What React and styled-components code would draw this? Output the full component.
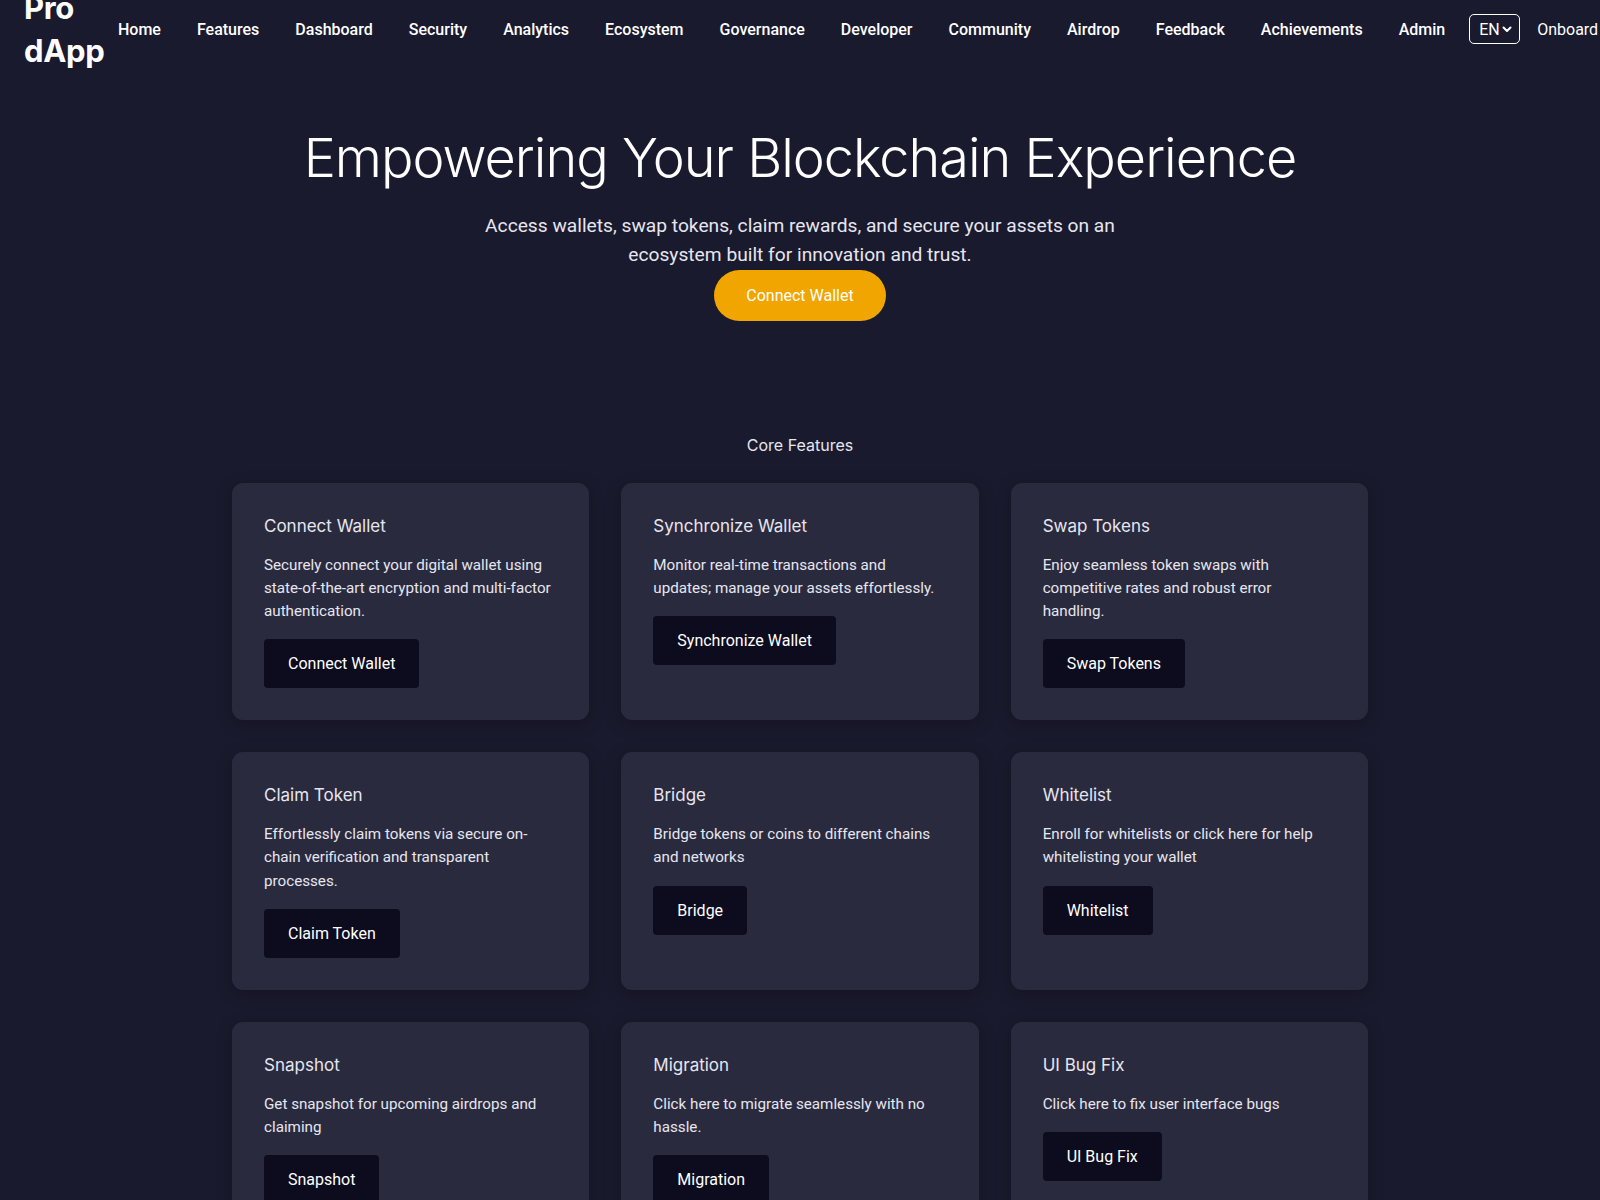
import styled, { createGlobalStyle } from "styled-components";

const BG = "#1a1a2e";
const CARD_BG = "#2a2a3f";
const BTN_DARK = "#0d0c1e";
const ACCENT = "#f0a500";
const TEXT = "#ffffff";
const MUTED = "#e6e6ee";

const HEADING_FONT = "Inter, 'Open Sans', sans-serif";
const BODY_FONT = "Roboto, 'Liberation Sans', sans-serif";

const GlobalStyle = createGlobalStyle`
  html, body {
    margin: 0;
    padding: 0;
    background: ${BG};
    overflow-x: hidden;
  }

  body {
    font-family: ${BODY_FONT};
    color: ${TEXT};
  }

  ::-webkit-scrollbar {
    display: none;
  }

  * {
    box-sizing: border-box;
  }
`;

const navLinks = [
  "Home",
  "Features",
  "Dashboard",
  "Security",
  "Analytics",
  "Ecosystem",
  "Governance",
  "Developer",
  "Community",
  "Airdrop",
  "Feedback",
  "Achievements",
  "Admin",
];

const features = [
  {
    title: "Connect Wallet",
    text: "Securely connect your digital wallet using state-of-the-art encryption and multi-factor authentication.",
  },
  {
    title: "Synchronize Wallet",
    text: "Monitor real-time transactions and updates; manage your assets effortlessly.",
  },
  {
    title: "Swap Tokens",
    text: "Enjoy seamless token swaps with competitive rates and robust error handling.",
  },
  {
    title: "Claim Token",
    text: "Effortlessly claim tokens via secure on-chain verification and transparent processes.",
  },
  {
    title: "Bridge",
    text: "Bridge tokens or coins to different chains and networks",
  },
  {
    title: "Whitelist",
    text: "Enroll for whitelists or click here for help whitelisting your wallet",
  },
  {
    title: "Snapshot",
    text: "Get snapshot for upcoming airdrops and claiming",
  },
  {
    title: "Migration",
    text: "Click here to migrate seamlessly with no hassle.",
  },
  {
    title: "UI Bug Fix",
    text: "Click here to fix user interface bugs",
  },
];

const App = () => {
  return (
    <>
      <GlobalStyle />
      <Header>
        <Logo>Pro dApp</Logo>
        <Nav>
          {navLinks.map((link) => (
            <NavLink key={link} href="#">
              {link}
            </NavLink>
          ))}
        </Nav>
        <LangSelect>
          EN
          <svg width="10" height="7" viewBox="0 0 10 7" fill="none">
            <path
              d="M1.5 1.5 L5 5 L8.5 1.5"
              stroke="#fff"
              strokeWidth="2"
              strokeLinecap="round"
              strokeLinejoin="round"
            />
          </svg>
        </LangSelect>
        <Onboard href="#">Onboard</Onboard>
      </Header>

      <Hero>
        <HeroTitle>Empowering Your Blockchain Experience</HeroTitle>
        <HeroText>
          Access wallets, swap tokens, claim rewards, and secure your assets on
          an ecosystem built for innovation and trust.
        </HeroText>
        <PrimaryButton>Connect Wallet</PrimaryButton>
      </Hero>

      <Features>
        <SectionTitle>Core Features</SectionTitle>
        <Grid>
          {features.map((f) => (
            <Card key={f.title}>
              <CardTitle>{f.title}</CardTitle>
              <CardText>{f.text}</CardText>
              <CardButton>{f.title}</CardButton>
            </Card>
          ))}
        </Grid>
      </Features>
    </>
  );
};

export default App;

//Styled Components

const Header = styled.header`
  height: 58px;
  padding-left: 24px;

  display: flex;
  align-items: center;

  white-space: nowrap;
`;

const Logo = styled.div`
  width: 84px;
  flex-shrink: 0;

  font-family: ${HEADING_FONT};
  font-size: 31px;
  font-weight: 700;
  line-height: 43px;
  letter-spacing: -0.3px;
  white-space: normal;
  color: ${TEXT};
`;

const Nav = styled.nav`
  display: flex;
  align-items: center;
  gap: 36px;
  margin-left: 10px;
`;

const NavLink = styled.a`
  color: ${TEXT};
  font-family: ${BODY_FONT};
  font-size: 16px;
  font-weight: 500;
  text-decoration: none;
`;

const LangSelect = styled.div`
  flex-shrink: 0;
  width: 51px;
  height: 30px;
  margin-left: 24px;
  padding: 0 7px 0 9px;

  display: flex;
  align-items: center;
  justify-content: space-between;

  border: 1px solid ${TEXT};
  border-radius: 5px;

  font-size: 16px;
  color: ${TEXT};
`;

const Onboard = styled.a`
  margin-left: 17px;
  color: ${TEXT};
  font-size: 16px;
  text-decoration: none;
`;

const Hero = styled.section`
  padding-top: 66px;
  display: flex;
  flex-direction: column;
  align-items: center;
  text-align: center;
`;

const HeroTitle = styled.h1`
  margin: 0;
  font-family: ${HEADING_FONT};
  font-size: 54px;
  font-weight: 300;
  line-height: 67px;
  letter-spacing: -1px;
  color: ${TEXT};
`;

const HeroText = styled.p`
  max-width: 680px;
  margin: 21px 0 0;
  font-size: 19.2px;
  line-height: 28.8px;
  color: ${MUTED};
`;

const PrimaryButton = styled.button`
  padding: 16px 32px;
  border: none;
  border-radius: 26px;
  background-color: ${ACCENT};

  font-family: ${BODY_FONT};
  font-size: 16px;
  line-height: 19px;
  color: ${TEXT};
  cursor: pointer;
`;

const Features = styled.section`
  max-width: 1200px;
  margin: 0 auto;
  padding: 114px 32px 64px;
`;

const SectionTitle = styled.h2`
  margin: 0 0 28px;
  text-align: center;
  font-family: ${HEADING_FONT};
  font-size: 16px;
  font-weight: 400;
  line-height: 20px;
  color: ${MUTED};
`;

const Grid = styled.div`
  display: grid;
  grid-template-columns: repeat(3, 1fr);
  gap: 32px;
`;

const Card = styled.div`
  padding: 32px;
  border-radius: 11px;
  background-color: ${CARD_BG};
  box-shadow: 0 4px 16px rgba(0, 0, 0, 0.25);
`;

const CardTitle = styled.h3`
  margin: 0 0 17px;
  font-family: ${HEADING_FONT};
  font-size: 17px;
  font-weight: 400;
  line-height: 22px;
  color: ${MUTED};
`;

const CardText = styled.p`
  margin: 0 0 16px;
  font-size: 15.2px;
  line-height: 23.2px;
  color: ${MUTED};
`;

const CardButton = styled.button`
  padding: 12px 24px;
  border: none;
  border-radius: 4px;
  background-color: ${BTN_DARK};

  font-family: ${BODY_FONT};
  font-size: 16px;
  line-height: 25px;
  color: ${TEXT};
  cursor: pointer;
`;
